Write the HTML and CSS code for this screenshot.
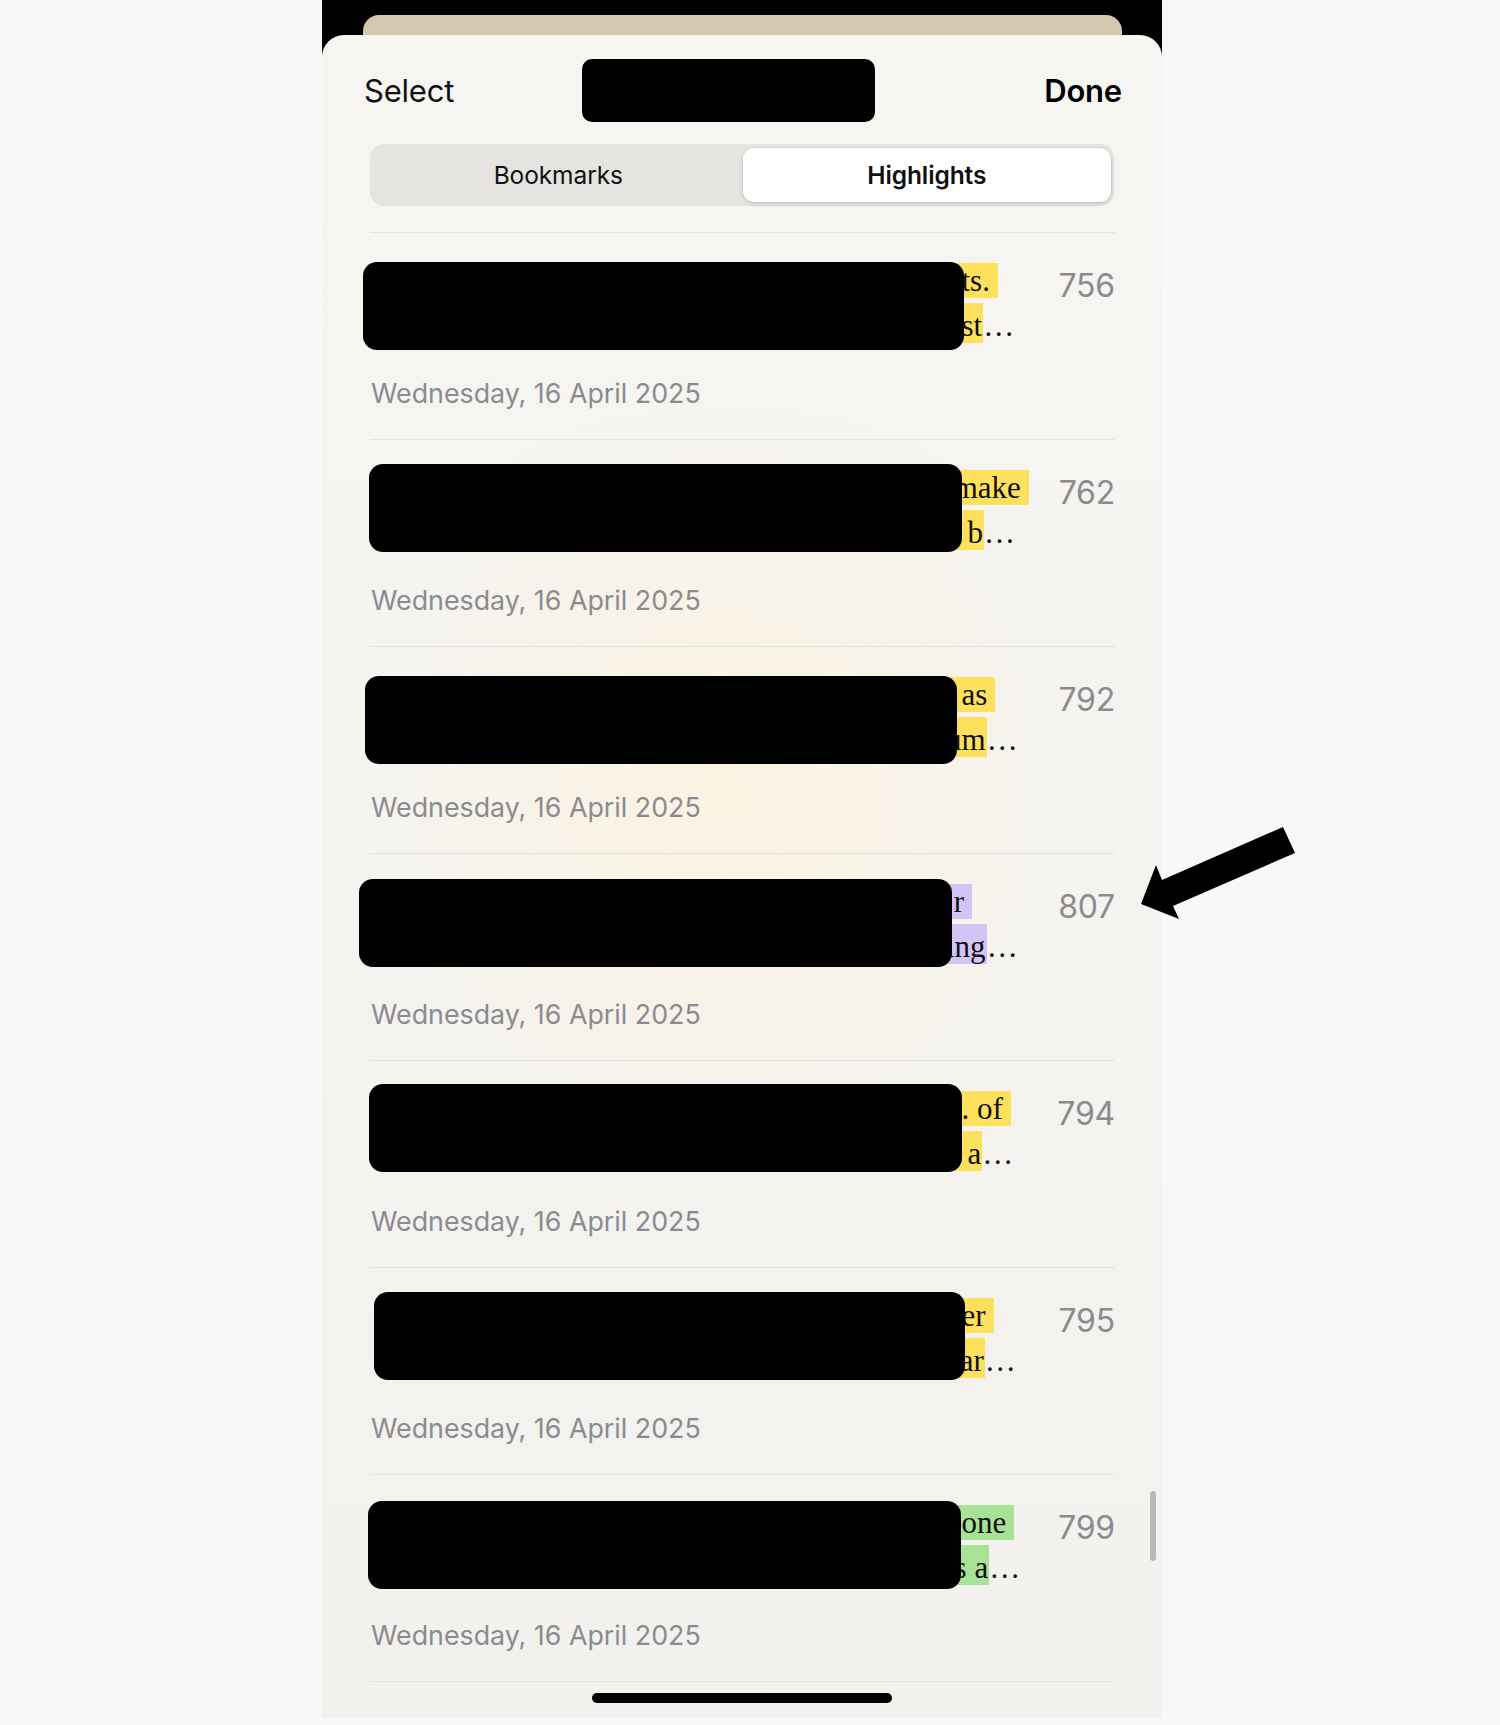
FILE: index.html
```html
<!DOCTYPE html>
<html lang="en">
<head>
<meta charset="utf-8">
<title>Highlights</title>
<link rel="stylesheet" href="styles.css">
</head>
<body>
<div class="stage">
  <div class="phone">
    <div class="back-card"></div>
    <div class="sheet">
      <header class="header">
        <span class="select">Select</span>
        <span class="title-redact"></span>
        <span class="done">Done</span>
      </header>
      <div class="segmented">
        <div class="seg">Bookmarks</div>
        <div class="seg seg-active">Highlights</div>
      </div>
      <div class="list">
        <div class="row">
          <div class="main">
            <div class="quote">
              <div class="line l1"><span class="hl yellow">nts.</span></div>
              <div class="line l2"><span class="hl yellow">ust</span>…</div>
              <div class="redact rd1"></div>
            </div>
            <div class="num">756</div>
          </div>
          <div class="date">Wednesday, 16 April 2025</div>
        </div>
        <div class="row">
          <div class="main">
            <div class="quote">
              <div class="line l1"><span class="hl yellow">&nbsp;make</span></div>
              <div class="line l2"><span class="hl yellow">e b</span>…</div>
              <div class="redact rd2"></div>
            </div>
            <div class="num">762</div>
          </div>
          <div class="date">Wednesday, 16 April 2025</div>
        </div>
        <div class="row">
          <div class="main">
            <div class="quote">
              <div class="line l1"><span class="hl yellow">&nbsp;&nbsp;as</span></div>
              <div class="line l2"><span class="hl yellow">um</span>…</div>
              <div class="redact rd3"></div>
            </div>
            <div class="num">792</div>
          </div>
          <div class="date">Wednesday, 16 April 2025</div>
        </div>
        <div class="row">
          <div class="main">
            <div class="quote">
              <div class="line l1"><span class="hl purple">&nbsp;r</span></div>
              <div class="line l2"><span class="hl purple">ing</span>…</div>
              <div class="redact rd4"></div>
            </div>
            <div class="num">807</div>
          </div>
          <div class="date">Wednesday, 16 April 2025</div>
        </div>
        <div class="row">
          <div class="main">
            <div class="quote">
              <div class="line l1"><span class="hl yellow">d. of</span></div>
              <div class="line l2"><span class="hl yellow">e a</span>…</div>
              <div class="redact rd5"></div>
            </div>
            <div class="num">794</div>
          </div>
          <div class="date">Wednesday, 16 April 2025</div>
        </div>
        <div class="row">
          <div class="main">
            <div class="quote">
              <div class="line l1"><span class="hl yellow">der</span></div>
              <div class="line l2"><span class="hl yellow">ear</span>…</div>
              <div class="redact rd6"></div>
            </div>
            <div class="num">795</div>
          </div>
          <div class="date">Wednesday, 16 April 2025</div>
        </div>
        <div class="row">
          <div class="main">
            <div class="quote">
              <div class="line l1"><span class="hl green">done</span></div>
              <div class="line l2"><span class="hl green">is a</span>…</div>
              <div class="redact rd7"></div>
            </div>
            <div class="num">799</div>
          </div>
          <div class="date">Wednesday, 16 April 2025</div>
        </div>
      </div>
      <div class="scrollbar"></div>
      <div class="home-indicator"></div>
    </div>
  </div>
  <svg class="arrow" width="180" height="110" viewBox="0 0 180 110" aria-hidden="true">
    <polygon points="153,7 165,33 43,86 49,99 11,84 26,45 32,60" fill="#000"/>
  </svg>
</div>
</body>
</html>
```
FILE: styles.css
```css
html, body {
  margin: 0;
  padding: 0;
  background: #f8f8f8;
}

.stage {
  position: relative;
  width: 1500px;
  height: 1725px;
  font-family: "Inter", "Liberation Sans", sans-serif;
}

.phone {
  margin-left: 322px;
  width: 840px;
  height: 1718px;
  background: #000;
  padding-top: 15px;
  box-sizing: border-box;
  overflow: hidden;
}

.back-card {
  margin: 0 40px 0 41px;
  height: 20px;
  background: #d4c7b0;
  border-radius: 16px 16px 0 0;
}

.sheet {
  position: relative;
  height: 1683px;
  border-radius: 22px 22px 0 0;
  background:
    radial-gradient(ellipse 380px 420px at 48% 45%, rgba(252, 242, 224, 0.9), rgba(252, 242, 224, 0) 100%),
    linear-gradient(#f6f5f2, #f4f3f0 60%, #f2f1ee);
  overflow: hidden;
}

.header {
  display: flex;
  align-items: center;
  padding: 24px 40px 0 42px;
  height: 63px;
}

.select {
  font-size: 31px;
  color: #111;
  letter-spacing: -0.2px;
}

.title-redact {
  width: 293px;
  height: 63px;
  margin-left: 128px;
  background: #000;
  border-radius: 10px;
}

.done {
  margin-left: auto;
  font-size: 31px;
  font-weight: 600;
  color: #000;
  letter-spacing: -0.2px;
}

.segmented {
  margin: 22px 48px 0 48px;
  height: 62px;
  box-sizing: border-box;
  padding: 4px 3px 4px 4px;
  background: #e5e4e1;
  border-radius: 14px;
  display: grid;
  grid-template-columns: 1fr 1fr;
}

.seg {
  display: flex;
  align-items: center;
  justify-content: center;
  font-size: 24.5px;
  color: #111;
  letter-spacing: -0.1px;
}

.seg-active {
  background: #fff;
  border-radius: 11px;
  font-weight: 600;
  box-shadow: 0 0 0 1px rgba(0, 0, 0, 0.05), 0 2px 5px rgba(0, 0, 0, 0.10);
}

.list {
  margin: 26px 47px 0 48px;
  border-top: 1px solid #e4e2de;
}

.row {
  padding: 30px 0 29px 0;
  border-bottom: 1px solid #e4e2de;
}

.main {
  display: flex;
}

.quote {
  position: relative;
  flex: 1;
  font-family: "Liberation Serif", "Times New Roman", serif;
  font-size: 31px;
  color: #111;
}

.line {
  padding-left: 576px;
  white-space: nowrap;
}

.l1 {
  height: 40px;
  line-height: 35px;
}

.l2 {
  height: 45px;
  line-height: 45px;
}

.hl {
  display: inline-block;
  vertical-align: top;
}

.l1 .hl {
  height: 35px;
  line-height: 35px;
  padding-right: 8px;
}

.l2 .hl {
  height: 40px;
  line-height: 45px;
  padding-right: 1px;
}

.yellow { background: #fde05c; }
.purple { background: #d3c4f8; }
.green { background: #a8e296; }

.redact {
  position: absolute;
  left: -7px;
  top: -1px;
  width: 601px;
  height: 88px;
  background: #000;
  border-radius: 14px;
}

.rd1 { left: -7px; top: -1px; width: 601px; }
.rd2 { left: -1px; top: -6px; width: 593px; }
.rd3 { left: -5px; top: -1px; width: 592px; }
.rd4 { left: -11px; top: -5px; width: 593px; }
.rd5 { left: -1px; top: -7px; width: 593px; }
.rd6 { left: 4px; top: -6px; width: 591px; }
.rd7 { left: -2px; top: -4px; width: 593px; }

.num {
  padding-top: 5px;
  font-size: 32px;
  line-height: 35px;
  color: #8b8b8f;
  letter-spacing: -0.2px;
}

.date {
  margin-top: 28px;
  font-size: 26.8px;
  line-height: 34px;
  color: #8b8b8f;
  padding-left: 1px;
}

.scrollbar {
  position: absolute;
  left: 828px;
  top: 1456px;
  width: 6px;
  height: 70px;
  border-radius: 3px;
  background: #b9b9b9;
}

.home-indicator {
  position: absolute;
  left: 270px;
  bottom: 15px;
  width: 300px;
  height: 10px;
  border-radius: 5px;
  background: #000;
}

.arrow {
  position: absolute;
  left: 1130px;
  top: 820px;
}
```
